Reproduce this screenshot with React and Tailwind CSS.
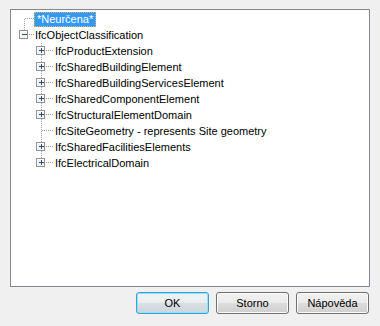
import React from 'react';

// dotted tree-line attributes
const dot = { stroke: '#a0a0a0', strokeWidth: 1, strokeDasharray: '1 1', shapeRendering: 'crispEdges' };

const Box = ({ x, plus }) => (
  <g shapeRendering="crispEdges">
    <rect x={x - 4.5} y={3.5} width={8} height={8} fill="#fff" stroke="#919191" />
    <rect x={x - 3.5} y={4.5} width={6} height={6} fill="#f4f4f4" stroke="none" />
    <line x1={x - 2} y1={7.5} x2={x + 3} y2={7.5} stroke="#2b4b8b" />
    {plus && <line x1={x + 0.5} y1={5} x2={x + 0.5} y2={10} stroke="#2b4b8b" />}
  </g>
);

const ChildGutter = ({ plus, last }) => (
  <svg width="44" height="16" className="shrink-0">
    {plus ? (
      <>
        <line x1="30.5" y1="0" x2="30.5" y2="3" {...dot} />
        {!last && <line x1="30.5" y1="12" x2="30.5" y2="16" {...dot} />}
        <line x1="35" y1="7.5" x2="43" y2="7.5" {...dot} />
        <Box x={30} plus />
      </>
    ) : (
      <>
        <line x1="30.5" y1="0" x2="30.5" y2={last ? 8 : 16} {...dot} />
        <line x1="31" y1="7.5" x2="43" y2="7.5" {...dot} />
      </>
    )}
  </svg>
);

const children = [
  { label: 'IfcProductExtension', plus: true },
  { label: 'IfcSharedBuildingElement', plus: true },
  { label: 'IfcSharedBuildingServicesElement', plus: true },
  { label: 'IfcSharedComponentElement', plus: true },
  { label: 'IfcStructuralElementDomain', plus: true },
  { label: 'IfcSiteGeometry - represents Site geometry', plus: false },
  { label: 'IfcSharedFacilitiesElements', plus: true },
  { label: 'IfcElectricalDomain', plus: true },
];

const Button = ({ children, primary }) => (
  <button
    className={
      primary
        ? 'w-[73px] h-[22px] rounded-[3px] border border-[#3c9fd4] shadow-[inset_0_0_0_1px_#8ee4fc] bg-[linear-gradient(to_bottom,#f0f4f6_0%,#e8edf0_50%,#d9e0e4_50%,#ccd6db_100%)] text-[11px] text-black'
        : 'w-[73px] h-[22px] rounded-[3px] border border-[#707070] shadow-[inset_0_0_0_1px_#fbfbfb] bg-[linear-gradient(to_bottom,#f2f2f2_0%,#ebebeb_50%,#dddddd_50%,#cfcfcf_100%)] text-[11px] text-black'
    }
  >
    {children}
  </button>
);

export default function App() {
  return (
    <div className="w-[380px] h-[326px] bg-[#f0f0f0] flex flex-col pt-[9px] px-[10px] overflow-hidden font-['Liberation_Sans',Arial,sans-serif]">
      <div className="h-[278px] border border-[#828790] bg-white pt-[1px] text-[11px] text-black leading-[16px]">
        {/* first root: *Neurčena* */}
        <div className="flex h-[16px] items-center">
          <svg width="23" height="16" className="shrink-0">
            <line x1="13.5" y1="8" x2="13.5" y2="16" {...dot} />
            <line x1="14" y1="7.5" x2="23" y2="7.5" {...dot} />
          </svg>
          <span className="h-[15px] leading-[13px] px-[2px] bg-[#3399ff] text-white border border-dotted border-[#d8b870]">
            *Neurčena*
          </span>
        </div>
        {/* second root */}
        <div className="flex h-[16px] items-center">
          <svg width="24" height="16" className="shrink-0">
            <line x1="13.5" y1="0" x2="13.5" y2="3" {...dot} />
            <line x1="18" y1="7.5" x2="24" y2="7.5" {...dot} />
            <Box x={13} />
          </svg>
          <span>IfcObjectClassification</span>
        </div>
        {children.map((c, i) => (
          <div key={c.label} className="flex h-[16px] items-center">
            <ChildGutter plus={c.plus} last={i === children.length - 1} />
            <span className="whitespace-nowrap">{c.label}</span>
          </div>
        ))}
      </div>
      <div className="flex justify-end gap-[7px] mt-[5px] pr-[1px]">
        <Button primary>OK</Button>
        <Button>Storno</Button>
        <Button>Nápověda</Button>
      </div>
    </div>
  );
}
